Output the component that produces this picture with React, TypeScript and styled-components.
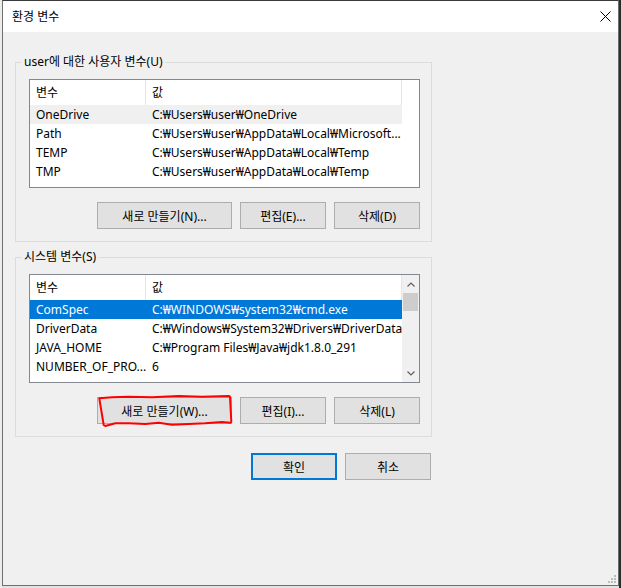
import styled, { createGlobalStyle } from "styled-components";

interface EnvVar {
  name: string;
  value: string;
}

const userVars: EnvVar[] = [
  { name: "OneDrive", value: "C:₩Users₩user₩OneDrive" },
  { name: "Path", value: "C:₩Users₩user₩AppData₩Local₩Microsoft..." },
  { name: "TEMP", value: "C:₩Users₩user₩AppData₩Local₩Temp" },
  { name: "TMP", value: "C:₩Users₩user₩AppData₩Local₩Temp" }
];

const systemVars: EnvVar[] = [
  { name: "ComSpec", value: "C:₩WINDOWS₩system32₩cmd.exe" },
  { name: "DriverData", value: "C:₩Windows₩System32₩Drivers₩DriverData" },
  { name: "JAVA_HOME", value: "C:₩Program Files₩Java₩jdk1.8.0_291" },
  { name: "NUMBER_OF_PRO...", value: "6" }
];

type RowState = "none" | "focus" | "selected";

const uiFont = `"Noto Sans", "Noto Sans CJK KR", sans-serif`;

const GlobalStyle = createGlobalStyle`
  html, body {
    margin: 0;
    padding: 0;
  }
  body {
    background: #e4e4e4;
    font-family: ${uiFont};
    font-size: 12px;
    color: #000;
  }
  * {
    box-sizing: border-box;
  }
`;

const Chevron = ({ down }: { down?: boolean }) => (
  <svg width="8" height="5" viewBox="0 0 8 5">
    <polyline
      points={down ? "0.5,0.5 4,4 7.5,0.5" : "0.5,4.5 4,1 7.5,4.5"}
      fill="none"
      stroke="#606060"
      strokeWidth="1.2"
    />
  </svg>
);

const VarList = ({
  rows,
  focusIndex,
  selectedIndex,
  scroll
}: {
  rows: EnvVar[];
  focusIndex?: number;
  selectedIndex?: number;
  scroll?: boolean;
}) => (
  <ListBox>
    <Table>
      <HeaderRow>
        <HeaderCell $width={116}>변수</HeaderCell>
        <HeaderCell $width={256}>값</HeaderCell>
      </HeaderRow>
      {rows.map((row, i) => {
        const state: RowState =
          i === selectedIndex ? "selected" : i === focusIndex ? "focus" : "none";
        return (
          <Row key={row.name} $state={state}>
            <Cell $width={116}>{row.name}</Cell>
            <Cell $width={256}>{row.value}</Cell>
          </Row>
        );
      })}
    </Table>
    {scroll && (
      <ScrollBar>
        <ArrowButton>
          <Chevron />
        </ArrowButton>
        <Thumb />
        <Track />
        <ArrowButton>
          <Chevron down />
        </ArrowButton>
      </ScrollBar>
    )}
  </ListBox>
);

const App = () => {
  return (
    <>
      <GlobalStyle />
      <Screen>
        <LeftEdge />
        <Window>
          <TitleBar>
            <Title>환경 변수</Title>
            <svg width="11" height="11" viewBox="0 0 11 11">
              <path d="M0.5 0.5 L10.5 10.5 M10.5 0.5 L0.5 10.5" stroke="#000" strokeWidth="1" />
            </svg>
          </TitleBar>
          <Body>
            <Group>
              <GroupTitle>user에 대한 사용자 변수(U)</GroupTitle>
              <VarList rows={userVars} focusIndex={0} />
              <ButtonRow>
                <Button $width={135}>새로 만들기(N)...</Button>
                <Button $width={86}>편집(E)...</Button>
                <Button $width={86}>삭제(D)</Button>
              </ButtonRow>
            </Group>
            <Group $gapTop={15}>
              <GroupTitle>시스템 변수(S)</GroupTitle>
              <VarList rows={systemVars} selectedIndex={0} scroll />
              <ButtonRow>
                <Marked>
                  <Button $width={135}>새로 만들기(W)...</Button>
                  <Scribble width="142" height="36" viewBox="0 0 142 36">
                    <path
                      d="M5.3 4.3 L18 3.3 L34.7 2.7 L58 3.3 L84.7 2 L108 2.7 L134.7 2 L136 2.7 L137.3 27.7 L136.3 28.7 L128 28 L111 29.3 L94.7 30 L78 30.7 L64.7 28.7 L51.3 30 L34.7 29.3 L21.3 29.3 L11.3 32 L9.7 31 Z"
                      fill="none"
                      stroke="#f00"
                      strokeWidth="2"
                      strokeLinejoin="round"
                    />
                  </Scribble>
                </Marked>
                <Button $width={86}>편집(I)...</Button>
                <Button $width={86}>삭제(L)</Button>
              </ButtonRow>
            </Group>
            <Footer>
              <Button $width={86} $default>
                확인
              </Button>
              <Button $width={86}>취소</Button>
            </Footer>
            <Grip width="9" height="9" viewBox="0 0 9 9">
              <rect x="6" y="0" width="2" height="2" fill="#bcbcbc" />
              <rect x="3" y="3" width="2" height="2" fill="#bcbcbc" />
              <rect x="6" y="3" width="2" height="2" fill="#bcbcbc" />
              <rect x="0" y="6" width="2" height="2" fill="#bcbcbc" />
              <rect x="3" y="6" width="2" height="2" fill="#bcbcbc" />
              <rect x="6" y="6" width="2" height="2" fill="#bcbcbc" />
            </Grip>
          </Body>
        </Window>
        <RightEdge />
      </Screen>
    </>
  );
};

export default App;

const Screen = styled.div`
  display: flex;
  align-items: flex-start;
  width: 621px;
  height: 588px;
  overflow: hidden;
  background: #e2e2e2;
`;
const LeftEdge = styled.div`
  width: 2px;
  height: 588px;
  background: #ececec;
`;
const RightEdge = styled.div`
  flex: 1;
  height: 588px;
  background: #2d2d2d;
`;
const Window = styled.div`
  display: flex;
  flex-direction: column;
  width: 617px;
  height: 586px;
  border: 1px solid #6f6f6f;
  border-top-color: #3a3a3a;
  background: #f0f0f0;
`;
const TitleBar = styled.div`
  display: flex;
  align-items: center;
  justify-content: space-between;
  height: 31px;
  padding: 0 7px 0 9px;
  background: #fff;
`;
const Title = styled.div`
  font-size: 12px;
  line-height: 16px;
  color: #000;
`;
const Body = styled.div`
  flex: 1;
  display: flex;
  flex-direction: column;
  padding: 30px 0 0 12px;
`;
const Group = styled.div<{ $gapTop?: number }>`
  display: flex;
  flex-direction: column;
  width: 417px;
  margin-top: ${(p) => p.$gapTop ?? 0}px;
  padding: 0 11px 12px 13px;
  border: 1px solid #dcdcdc;
`;
const GroupTitle = styled.div`
  align-self: flex-start;
  margin: -9px 0 0 -7px;
  padding: 0 2px;
  height: 16px;
  line-height: 16px;
  background: #f0f0f0;
  white-space: nowrap;
`;
const ListBox = styled.div`
  display: flex;
  margin-top: 9px;
  width: 391px;
  height: 109px;
  border: 1px solid #828790;
  background: #fff;
  overflow: hidden;
`;
const Table = styled.div`
  flex: 1;
  display: flex;
  flex-direction: column;
  overflow: hidden;
`;
const HeaderRow = styled.div`
  display: flex;
  flex-shrink: 0;
  height: 25px;
`;
const HeaderCell = styled.div<{ $width: number }>`
  width: ${(p) => p.$width}px;
  flex-shrink: 0;
  padding-left: 6px;
  line-height: 25px;
  border-right: 1px solid #e5e5e5;
  color: #000;
`;
const rowBg: Record<RowState, string> = {
  none: "transparent",
  focus: "#f0f0f0",
  selected: "#0078d7"
};
const Row = styled.div<{ $state: RowState }>`
  display: flex;
  flex-shrink: 0;
  width: 372px;
  height: 19px;
  background: ${(p) => rowBg[p.$state]};
  color: ${(p) => (p.$state === "selected" ? "#fff" : "#000")};
`;
const Cell = styled.div<{ $width: number }>`
  width: ${(p) => p.$width}px;
  flex-shrink: 0;
  padding-left: 6px;
  line-height: 19px;
  white-space: nowrap;
  overflow: hidden;
`;
const ScrollBar = styled.div`
  display: flex;
  flex-direction: column;
  width: 17px;
  background: #f0f0f0;
`;
const ArrowButton = styled.div`
  display: flex;
  align-items: center;
  justify-content: center;
  height: 18px;
  flex-shrink: 0;
`;
const Thumb = styled.div`
  height: 18px;
  margin: 0 1px;
  background: #cdcdcd;
`;
const Track = styled.div`
  flex: 1;
`;
const ButtonRow = styled.div`
  display: flex;
  justify-content: flex-end;
  gap: 8px;
  margin-top: 14px;
`;
const Button = styled.div<{ $width: number; $default?: boolean }>`
  display: flex;
  align-items: center;
  justify-content: center;
  width: ${(p) => p.$width}px;
  height: 27px;
  background: #e1e1e1;
  border: ${(p) => (p.$default ? "2px solid #0078d7" : "1px solid #adadad")};
  color: #000;
  white-space: nowrap;
`;
const Marked = styled.div`
  position: relative;
`;
const Scribble = styled.svg`
  position: absolute;
  left: -3px;
  top: -3px;
  pointer-events: none;
`;
const Footer = styled.div`
  display: flex;
  justify-content: flex-end;
  gap: 8px;
  width: 417px;
  margin-top: 16px;
  padding-right: 1px;
`;
const Grip = styled.svg`
  align-self: flex-end;
  margin: auto 1px 1px 0;
`;
